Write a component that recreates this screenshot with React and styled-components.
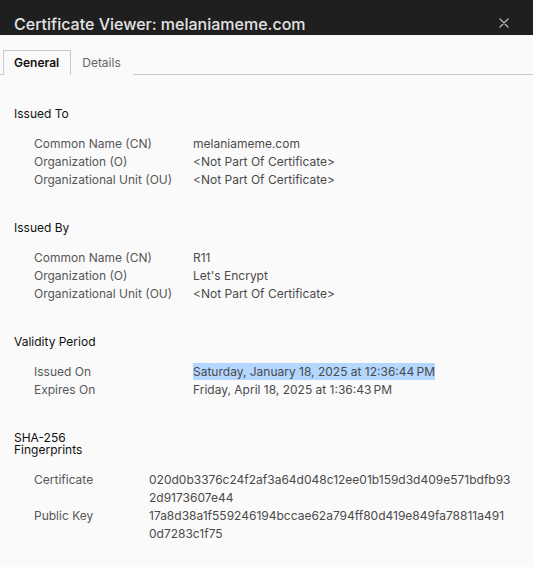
import styled, { createGlobalStyle } from "styled-components"

const GlobalStyle = createGlobalStyle`
    html, body {
        margin: 0;
        padding: 0;
        background: #fafafa;
    }
    body {
        font-family: Inter, "Liberation Sans", Arial, sans-serif;
        -webkit-font-smoothing: antialiased;
    }
`

// Data shown in the viewer
const sections = [
    {
        title: "Issued To",
        rows: [
            ["Common Name (CN)", "melaniameme.com"],
            ["Organization (O)", "<Not Part Of Certificate>"],
            ["Organizational Unit (OU)", "<Not Part Of Certificate>"],
        ],
    },
    {
        title: "Issued By",
        rows: [
            ["Common Name (CN)", "R11"],
            ["Organization (O)", "Let's Encrypt"],
            ["Organizational Unit (OU)", "<Not Part Of Certificate>"],
        ],
    },
    {
        title: "Validity Period",
        rows: [
            ["Issued On", "Saturday, January 18, 2025 at 12:36:44\u202FPM", true],
            ["Expires On", "Friday, April 18, 2025 at 1:36:43\u202FPM"],
        ],
    },
]

const fingerprints = [
    ["Certificate", ["020d0b3376c24f2af3a64d048c12ee01b159d3d409e571bdfb93", "2d9173607e44"]],
    ["Public Key", ["17a8d38a1f559246194bccae62a794ff80d419e849fa78811a491", "0d7283c1f75"]],
]

const CloseIcon = () => (
    <svg width="10" height="10" viewBox="0 0 10 10">
        <path d="M1 1 L9 9 M9 1 L1 9" stroke="#b4b4b4" strokeWidth="1.3" strokeLinecap="round" />
    </svg>
)

const App = () => {
    return (
        <Window>
            <GlobalStyle />
            <TitleBar>
                <Title>Certificate Viewer: melaniameme.com</Title>
                <CloseButton aria-label="Close"><CloseIcon /></CloseButton>
            </TitleBar>

            <Tabs>
                <Tab active>General</Tab>
                <Tab>Details</Tab>
            </Tabs>

            <Content>
                {sections.map(section => (
                    <Section key={section.title}>
                        <Heading>{section.title}</Heading>
                        <Fields labelWidth={159}>
                            {section.rows.map(([label, value, selected]) => (
                                <Row key={label}>
                                    <Label>{label}</Label>
                                    <Value><Selectable selected={selected}>{value}</Selectable></Value>
                                </Row>
                            ))}
                        </Fields>
                    </Section>
                ))}

                <Section>
                    <Heading narrow>SHA-256 Fingerprints</Heading>
                    <Fields labelWidth={115}>
                        {fingerprints.map(([label, lines]) => (
                            <Row key={label}>
                                <Label>{label}</Label>
                                <Value>
                                    {lines.map(line => <HashLine key={line}>{line}</HashLine>)}
                                </Value>
                            </Row>
                        ))}
                    </Fields>
                </Section>
            </Content>
        </Window>
    )
}

const Window = styled.div`
    width: 533px;
    min-height: 567px;
    background: #fafafa;
    display: flex;
    flex-direction: column;
`

const TitleBar = styled.div`
    height: 35px;
    background: #1f1f1f;
    display: flex;
    align-items: flex-start;
    justify-content: space-between;
    padding: 14px 24px 0 14px;
    box-sizing: border-box;
`

const Title = styled.h1`
    margin: 0;
    font-size: 16px;
    line-height: 20px;
    font-weight: 500;
    color: #e3e3e3;
`

const CloseButton = styled.button`
    border: none;
    background: none;
    padding: 0;
    margin-top: 4px;
    width: 10px;
    height: 10px;
    display: flex;
`

const Tabs = styled.div`
    display: flex;
    margin-top: 15px;
    padding-left: 3px;
    border-bottom: 1px solid #c9c9c9;
    height: 24px;
`

const Tab = styled.div`
    padding: 0 11px 0 10px;
    font-size: 12px;
    line-height: 24px;
    font-weight: ${({active}) => active ? 600 : 400};
    color: ${({active}) => active ? "#111" : "#666"};
    border: 1px solid ${({active}) => active ? "#c9c9c9" : "transparent"};
    border-bottom: none;
    background: #fafafa;
    margin-bottom: -1px;
    height: 25px;
    box-sizing: border-box;
`

const Content = styled.div`
    padding: 0 14px 30px 14px;
`

const Section = styled.section`
    margin-top: 33px;
`

const Heading = styled.h2`
    margin: 0 0 15px 0;
    font-size: 12px;
    line-height: 12px;
    font-weight: 400;
    color: #111;
    max-width: ${({narrow}) => narrow ? "90px" : "none"};
`

const Fields = styled.div`
    display: grid;
    grid-template-columns: ${({labelWidth}) => labelWidth}px 1fr;
    padding-left: 20px;
`

const Row = styled.div`
    display: contents;
`

const Label = styled.div`
    font-size: 12px;
    line-height: 18px;
    color: #575757;
`

const Value = styled.div`
    font-size: 12px;
    line-height: 18px;
    color: #4a4a4a;
`

const Selectable = styled.span`
    background: ${({selected}) => selected ? "#b3d7ff" : "transparent"};
    padding: 1px 0;
`

const HashLine = styled.div`
    white-space: nowrap;
`

export default App
